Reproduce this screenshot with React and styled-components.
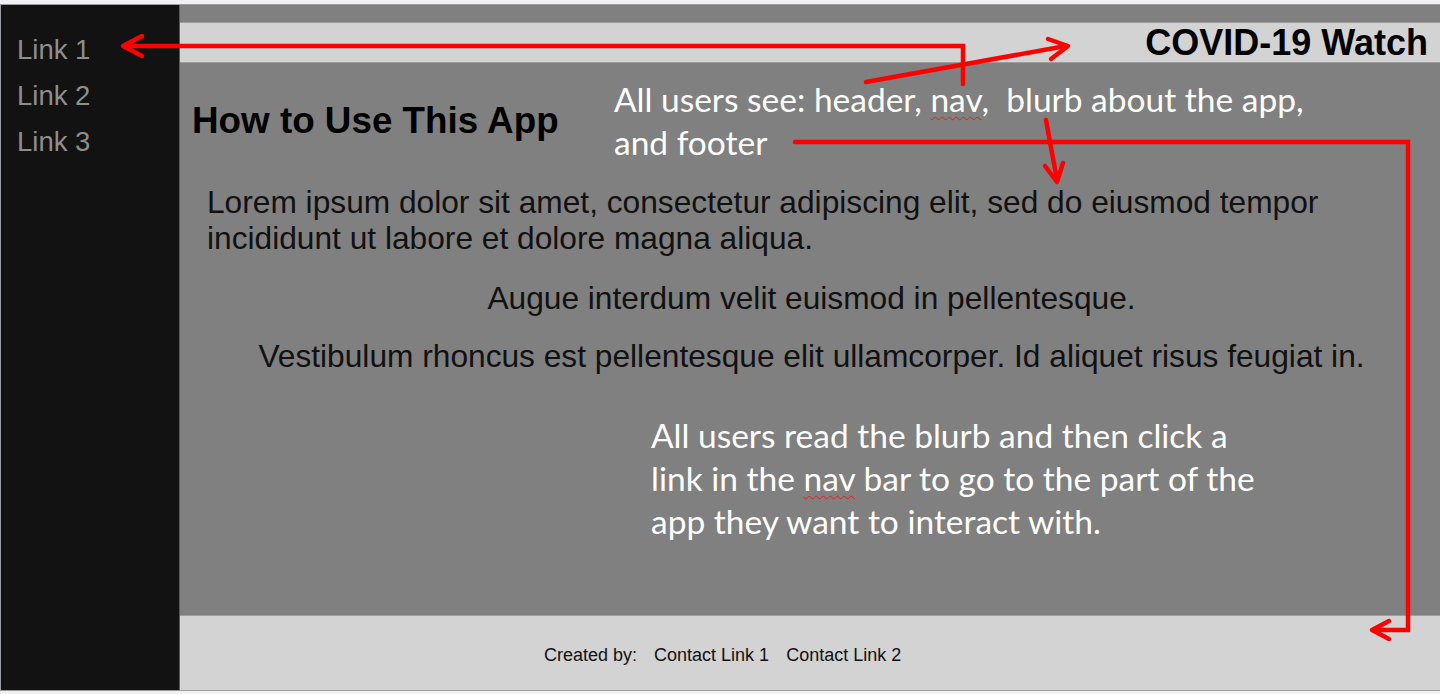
import React from "react";
import styled, { createGlobalStyle } from "styled-components";

const Global = createGlobalStyle`
  html, body { margin: 0; padding: 0; }
  body {
    background: #eef0f2;
    font-family: "Liberation Sans", Arial, sans-serif;
    overflow: hidden;
  }
`;

const Page = styled.div`
  position: relative;
  width: 1440px;
  height: 694px;
  padding-top: 4px;
  box-sizing: border-box;
`;

const Frame = styled.div`
  height: 687px;
  box-sizing: border-box;
  border: 1px solid #9a9ea3;
  border-right: none;
  display: grid;
  grid-template-columns: 179px 1fr;
`;

const Sidebar = styled.nav`
  background: #121212;
  border-right: 1px solid #5a5a5a;
  padding: 22px 0 0 16px;
  display: flex;
  flex-direction: column;
`;

const NavLink = styled.a`
  font-size: 27.5px;
  line-height: 46px;
  color: #8e8e8e;
  text-decoration: none;
`;

const Main = styled.div`
  background: #808080;
  padding-top: 17px;
  display: flex;
  flex-direction: column;
  min-width: 0;
`;

const Header = styled.header`
  height: 41px;
  box-sizing: border-box;
  background: #d3d3d3;
  border-top: 1px solid #9d9d9d;
  border-bottom: 1px solid #9d9d9d;
  display: flex;
  align-items: center;
  justify-content: flex-end;
  padding-right: 12px;
`;

const Title = styled.h1`
  margin: 0;
  font-size: 36px;
  font-weight: bold;
  color: #000;
  line-height: 40px;
`;

const Content = styled.section`
  flex: 1;
  padding: 37px 24px 0 12px;
`;

const Heading = styled.h2`
  margin: 0 0 43px;
  font-size: 36.8px;
  line-height: 41px;
  font-weight: bold;
  color: #000;
`;

const Para = styled.p`
  margin: 0 0 ${(p) => p.$gap || 23}px 15px;
  font-size: 31.7px;
  line-height: 36px;
  color: #111;
  text-align: ${(p) => p.$align || "left"};
`;

const Footer = styled.footer`
  height: 75px;
  box-sizing: border-box;
  background: #d3d3d3;
  border-top: 1px solid #9d9d9d;
  display: flex;
  align-items: center;
  gap: 17px;
  padding: 4px 0 0 364px;
  font-size: 18px;
  color: #111;
`;

const FooterLink = styled.a`
  color: #111;
  text-decoration: none;
`;

const Note = styled.div`
  position: absolute;
  left: ${(p) => p.$x}px;
  top: ${(p) => p.$y}px;
  font-family: Lato, "Open Sans", sans-serif;
  font-size: 33.5px;
  line-height: 43px;
  color: #fff;
  white-space: pre;
  pointer-events: none;
`;

const Typo = styled.span`
  text-decoration: underline wavy #e02020;
  text-decoration-thickness: 1px;
  text-underline-offset: 4px;
`;

const Arrows = styled.svg`
  position: absolute;
  inset: 0;
  pointer-events: none;
`;

export default function App() {
  return (
    <>
      <Global />
      <Page>
        <Frame>
          <Sidebar>
            <NavLink href="#">Link 1</NavLink>
            <NavLink href="#">Link 2</NavLink>
            <NavLink href="#">Link 3</NavLink>
          </Sidebar>
          <Main>
            <Header>
              <Title>COVID-19 Watch</Title>
            </Header>
            <Content>
              <Heading>How to Use This App</Heading>
              <Para $gap={24}>
                Lorem ipsum dolor sit amet, consectetur adipiscing elit, sed do eiusmod tempor
                incididunt ut labore et dolore magna aliqua.
              </Para>
              <Para $align="center" $gap={22}>
                Augue interdum velit euismod in pellentesque.
              </Para>
              <Para $align="center">
                Vestibulum rhoncus est pellentesque elit ullamcorper. Id aliquet risus feugiat in.
              </Para>
            </Content>
            <Footer>
              <span>Created by:</span>
              <FooterLink href="#">Contact Link 1</FooterLink>
              <FooterLink href="#">Contact Link 2</FooterLink>
            </Footer>
          </Main>
        </Frame>

        <Note $x={614} $y={78}>
          All users see: header, <Typo>nav</Typo>,  blurb about the app,{"\n"}and footer
        </Note>
        <Note $x={651} $y={414}>
          All users read the blurb and then click a{"\n"}link in the <Typo>nav</Typo> bar to go to the part of the{"\n"}app they want to interact with.
        </Note>

        <Arrows width="1440" height="694" viewBox="0 0 1440 694">
          <g fill="none" stroke="#ff0000" strokeWidth="4.5" strokeLinecap="round" strokeLinejoin="miter">
            <path d="M963 84 V46 H124" />
            <path d="M142 36 L123 46 L142 56" strokeLinejoin="round" />
            <path d="M866 82 L1066 46" />
            <path d="M1048 39 L1068 46 L1051 59" strokeLinejoin="round" />
            <path d="M1046 120 L1057 180" />
            <path d="M1045 166 L1057 182 L1063 163" strokeLinejoin="round" />
            <path d="M795 142 H1408 V630 H1374" />
            <path d="M1389 621 L1372 630 L1389 639" strokeLinejoin="round" />
          </g>
        </Arrows>
      </Page>
    </>
  );
}
